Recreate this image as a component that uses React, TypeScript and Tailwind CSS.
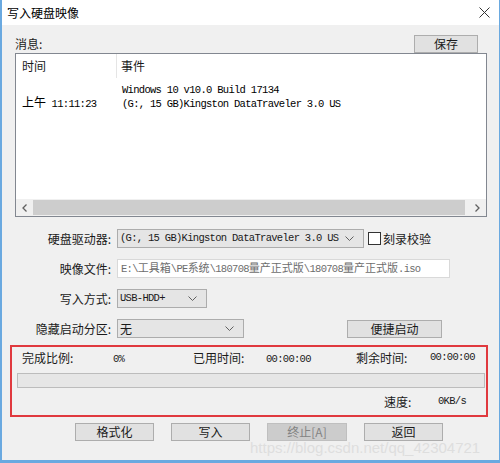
import React from "react";

const CJK = "font-['Microsoft_YaHei','Noto_Sans_CJK_SC',sans-serif]";
const MONO = "font-['Liberation_Mono','Noto_Sans_CJK_SC',monospace] text-[10.5px] tracking-[-0.7px]";

// ascii runs in mono, CJK runs in a bigger CJK face
function Mixed({ text, cjkSize = "text-[11px]" }: { text: string; cjkSize?: string }) {
  const parts = text.split(/([\u3000-\u9fff\uff00-\uffef]+)/);
  return (
    <span className={`${MONO} whitespace-pre`}>
      {parts.map((p, i) =>
        /[\u3000-\u9fff\uff00-\uffef]/.test(p) ? (
          <span key={i} className={`${CJK} ${cjkSize} tracking-normal`}>
            {p}
          </span>
        ) : (
          <span key={i}>{p}</span>
        )
      )}
    </span>
  );
}

function Chevron() {
  return (
    <svg width="9" height="5" viewBox="0 0 9 5" className="shrink-0">
      <polyline points="0.5,0.5 4.5,4.5 8.5,0.5" fill="none" stroke="#606060" strokeWidth="1" />
    </svg>
  );
}

function Select({ width, children }: { width: string; children: React.ReactNode }) {
  return (
    <div
      className={`${width} h-[19px] bg-[#e5e5e5] border border-[#acacac] flex items-center pl-[2px] pr-[9px] justify-between`}
    >
      <div className="flex items-center">{children}</div>
      <Chevron />
    </div>
  );
}

function Btn({ label, width, disabled }: { label: string; width: string; disabled?: boolean }) {
  return (
    <div
      className={`${width} h-[18px] flex items-center justify-center text-[12px] ${CJK} border ${
        disabled ? "bg-[#cccccc] border-[#bfbfbf] text-[#838383]" : "bg-[#e1e1e1] border-[#adadad] text-[#1a1a1a]"
      }`}
    >
      {label}
    </div>
  );
}

export default function App() {
  return (
    <div
      className={`relative w-[500px] h-[463px] bg-[#f0f0f0] border-l-2 border-r border-b-[3px] border-[#6aa9e0] flex flex-col text-[#1a1a1a] ${CJK} overflow-hidden`}
    >
      {/* title bar */}
      <div className="h-[25px] bg-white flex items-center justify-between pl-[5px] pr-[9px] shrink-0">
        <span className="text-[12px] text-black">写入硬盘映像</span>
        <svg width="11" height="11" viewBox="0 0 11 11">
          <path d="M0.5 0.5 L10.5 10.5 M10.5 0.5 L0.5 10.5" stroke="#333" strokeWidth="1" />
        </svg>
      </div>

      <div className="flex-1 flex flex-col pl-[13px] pr-[12px]">
        {/* 消息 + 保存 */}
        <div className="mt-[9px] h-[19px] flex items-center justify-between">
          <span className="text-[12px]">消息:</span>
          <div className="mr-[9px]">
            <Btn label="保存" width="w-[64px]" />
          </div>
        </div>

        {/* message list */}
        <div className="h-[164px] border border-[#828790] bg-white flex flex-col">
          <div className="h-[24px] flex text-[12px] shrink-0">
            <div className="w-[101px] border-r border-[#e5e5e5] pl-[6px] flex items-center">时间</div>
            <div className="pl-[4px] flex items-center">事件</div>
          </div>
          <div className="flex h-[14px] mt-[1px] items-center">
            <div className="w-[101px]" />
            <div className="pl-[5px] text-black">
              <Mixed text="Windows 10 v10.0 Build 17134" />
            </div>
          </div>
          <div className="flex h-[14px] items-center">
            <div className="w-[101px] pl-[6px] text-black">
              <Mixed text="上午 11:11:23" cjkSize="text-[12px]" />
            </div>
            <div className="pl-[5px] text-black">
              <Mixed text="(G:, 15 GB)Kingston DataTraveler 3.0 US" />
            </div>
          </div>
          <div className="flex-1" />
          {/* horizontal scrollbar */}
          <div className="h-[17px] bg-[#f0f0f0] flex items-center shrink-0">
            <div className="w-[17px] flex items-center justify-center">
              <svg width="5" height="8" viewBox="0 0 5 8">
                <polyline points="4.5,0.5 1,4 4.5,7.5" fill="none" stroke="#606060" strokeWidth="1.3" />
              </svg>
            </div>
            <div className="flex-1 h-[15px] bg-[#cdcdcd] mr-[4px]" />
            <div className="w-[17px] flex items-center justify-center">
              <svg width="5" height="8" viewBox="0 0 5 8">
                <polyline points="0.5,0.5 4,4 0.5,7.5" fill="none" stroke="#606060" strokeWidth="1.3" />
              </svg>
            </div>
          </div>
        </div>

        {/* form */}
        <div className="mt-[12px] grid grid-cols-[96px_1fr] gap-x-[6px] gap-y-[11px] text-[12px]">
          <div className="h-[19px] flex items-center justify-end">硬盘驱动器:</div>
          <div className="h-[19px] flex items-center">
            <Select width="w-[247px]">
              <Mixed text="(G:, 15 GB)Kingston DataTraveler 3.0 US" />
            </Select>
            <div className="ml-[4px] w-[13px] h-[13px] border border-[#333] bg-white" />
            <span className="ml-[2px]">刻录校验</span>
          </div>

          <div className="h-[19px] flex items-center justify-end">映像文件:</div>
          <div className="h-[19px] flex items-center">
            <div className="w-[333px] h-[19px] bg-white border border-[#d9d9d9] flex items-center pl-[3px] text-[#6d6d6d]">
              <Mixed text="E:\工具箱\PE系统\180708量产正式版\180708量产正式版.iso" />
            </div>
          </div>

          <div className="h-[19px] flex items-center justify-end">写入方式:</div>
          <div className="h-[19px] flex items-center">
            <Select width="w-[90px]">
              <Mixed text="USB-HDD+" />
            </Select>
          </div>

          <div className="h-[19px] flex items-center justify-end">隐藏启动分区:</div>
          <div className="h-[19px] flex items-center">
            <Select width="w-[127px]">
              <span className="text-[12px]">无</span>
            </Select>
            <div className="ml-[103px]">
              <Btn label="便捷启动" width="w-[95px]" />
            </div>
          </div>
        </div>

        {/* progress box */}
        <div className="mt-[7px] ml-[-5px] w-[478px] h-[72px] border-2 border-[#e0393e] flex flex-col pl-[10px] text-[12px]">
          <div className="mt-[2px] h-[17px] flex items-center">
            <span className="w-[91px]">完成比例:</span>
            <span className="w-[80px]">
              <Mixed text="0%" />
            </span>
            <span className="w-[73px]">已用时间:</span>
            <span className="w-[90px]">
              <Mixed text="00:00:00" />
            </span>
            <span className="w-[74px]">剩余时间:</span>
            <Mixed text="00:00:00" />
          </div>
          <div className="mt-[7px] ml-[-5px] w-[468px] h-[15px] bg-[#e6e6e6] border border-[#bcbcbc]" />
          <div className="mt-[6px] h-[16px] flex items-center">
            <span className="ml-[362px] w-[54px]">速度:</span>
            <Mixed text="0KB/s" />
          </div>
        </div>

        {/* buttons */}
        <div className="mt-[6px] ml-[60px] flex gap-[17px]">
          <Btn label="格式化" width="w-[79px]" />
          <Btn label="写入" width="w-[79px]" />
          <Btn label="终止[A]" width="w-[80px]" disabled />
          <Btn label="返回" width="w-[79px]" />
        </div>
      </div>

      {/* csdn watermark */}
      <div className="absolute left-[248px] top-[440px] text-[15px] leading-[16px] font-['Liberation_Sans',sans-serif] text-[#dedede] whitespace-nowrap">
        https://blog.csdn.net/qq_42304721
      </div>
    </div>
  );
}
